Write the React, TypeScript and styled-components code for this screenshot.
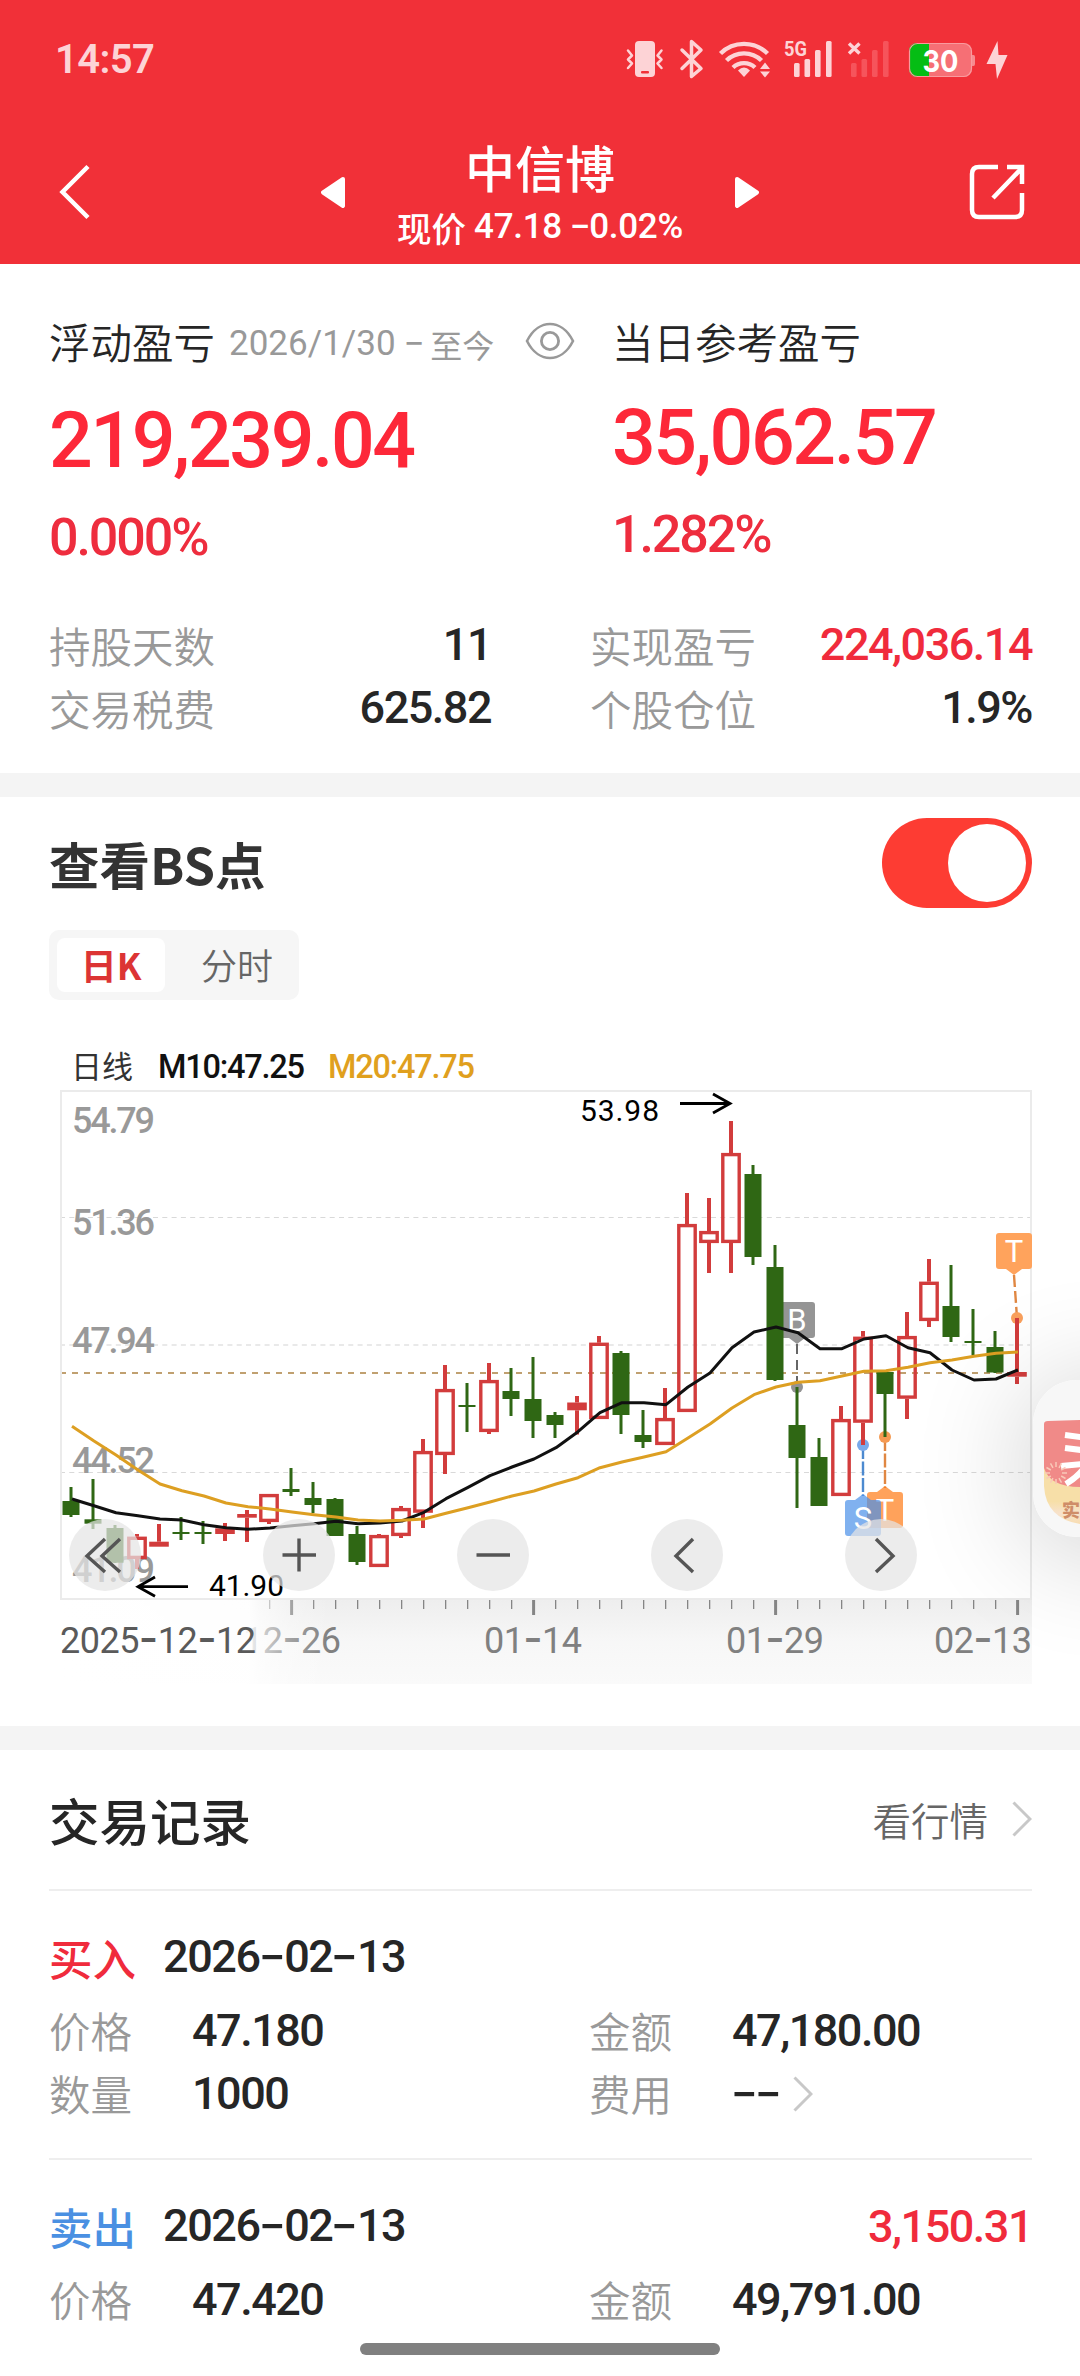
import React from "react";
import styled, { createGlobalStyle } from "styled-components";

const FONT = `Roboto, "Noto Sans CJK SC", sans-serif`;
const CJK = `"Noto Sans CJK SC", sans-serif`;

const Global = createGlobalStyle`
  * { box-sizing: border-box; }
  body { margin: 0; background: #fff; font-family: ${FONT}; }
`;

const Page = styled.div`
  position: relative;
  width: 1080px;
  height: 2376px;
  overflow: hidden;
  background: #fff;
  display: flex;
  flex-direction: column;
`;

/* ---------- text primitives ---------- */

const Cn = styled.span<{ size: number; color?: string; weight?: number; ls?: number; line?: number }>`
  display: block;
  font-family: ${CJK};
  font-size: ${(p) => p.size}px;
  line-height: ${(p) => p.line ?? 60}px;
  letter-spacing: ${(p) => p.ls ?? 0}px;
  font-weight: ${(p) => p.weight ?? 400};
  color: ${(p) => p.color ?? "#262626"};
  white-space: nowrap;
`;

const NumText = styled.span<{ size: number; color?: string; weight?: number; ls?: number; line?: number }>`
  display: block;
  font-family: ${FONT};
  font-size: ${(p) => p.size}px;
  line-height: ${(p) => p.line ?? 60}px;
  letter-spacing: ${(p) => p.ls ?? -1.5}px;
  font-weight: ${(p) => p.weight ?? 480};
  color: ${(p) => p.color ?? "#262626"};
  white-space: pre;
`;

const Dash = styled.span`
  display: inline-block;
  font-family: Inter, sans-serif;
  line-height: 1;
  letter-spacing: 0;
  margin: 0 0.04em;
  transform: translateY(-0.03em) scaleX(1.35);
`;

type NumProps = { children: string; size: number; color?: string; weight?: number; ls?: number; line?: number };

function Num({ children, ...rest }: NumProps) {
  return (
    <NumText {...rest}>
      {children.split(/(-)/).map((part, i) => (part === "-" ? <Dash key={i}>-</Dash> : part))}
    </NumText>
  );
}

/* ---------- header ---------- */

const Header = styled.header`
  height: 264px;
  background: #f13038;
  flex: none;
`;

const StatusBar = styled.div`
  height: 120px;
  padding: 0 60px 0 55px;
  display: flex;
  align-items: center;
  justify-content: space-between;
`;

const NavBar = styled.div`
  height: 144px;
  padding: 0 55px 0 57px;
  display: grid;
  grid-template-columns: 264px 24px 1fr 24px 210px 56px;
  align-items: center;
`;

const TitleBlock = styled.div`
  display: flex;
  flex-direction: column;
  align-items: center;
  padding-top: 2px;
`;

const Subtitle = styled.div`
  display: flex;
  align-items: center;
  gap: 8px;
  margin-top: 5px;
`;

const soft = "#fdd3d6";

function StatusIcons() {
  const bars = [
    [0, 63],
    [10.5, 59],
    [21, 50],
    [32, 41],
  ];
  return (
    <svg width="400" height="50" viewBox="620 35 400 50">
      <rect x="635" y="41" width="20" height="36" rx="4" fill={soft} />
      <rect x="641" y="71" width="8" height="2.4" rx="1" fill="#f13038" />
      <path d="M628 50.500l4 5-4 4 4 4-4 4.500M661.500 50.500l-4 5 4 4-4 4 4 4.500" fill="none" stroke={soft} strokeWidth="2.500" strokeLinecap="round" strokeLinejoin="round" />
      <path d="M682 50l19 18.500-9.500 8V41.500l9.500 8.500-19 18.500" fill="none" stroke={soft} strokeWidth="3.500" strokeLinecap="round" strokeLinejoin="round" />
      <g fill="none" stroke={soft} strokeWidth="4.400">
        <path d="M720.500 53.500a33.500 33.500 0 0 1 47 0" />
        <path d="M726.500 60.500a25 25 0 0 1 35 0" />
        <path d="M733 67.500a16 16 0 0 1 22 0" />
      </g>
      <path d="M738 70.500q6-6 12 0l-6 6.500z" fill={soft} />
      <path d="M760 69l5-6.500 5 6.500zM760 71.500h10l-5 6z" fill={soft} />
      <text x="784" y="56" fontFamily={FONT} fontSize="21" fontWeight="700" textLength="23" lengthAdjust="spacingAndGlyphs" fill={soft}>5G</text>
      {bars.map(([dx, y]) => (
        <rect key={dx} x={794 + dx} y={y} width="5.600" height={77 - y} rx="1.500" fill={soft} />
      ))}
      <path d="M849 43.500l10.500 10m0-10l-10.500 10" stroke={soft} strokeWidth="3.400" />
      {bars.map(([dx, y]) => (
        <rect key={dx} x={851 + dx} y={y} width="5.600" height={77 - y} rx="1.500" fill="#f6545b" />
      ))}
      <rect x="909" y="43" width="63" height="34" rx="8" fill="#f66f75" />
      <path d="M929 43h-12a8 8 0 0 0-8 8v18a8 8 0 0 0 8 8h12z" fill="#05bd14" />
      <rect x="909.500" y="43.500" width="62" height="33" rx="8" fill="none" stroke="#f99a9e" strokeWidth="1.200" />
      <path d="M972 55h1.500q1.500 0 1.500 2v7q0 2-1.500 2H972z" fill="#f78a8f" />
      <text x="940.500" y="71.500" fontFamily={`Inter, ${FONT}`} fontSize="30" fontWeight="650" textAnchor="middle" textLength="36" lengthAdjust="spacingAndGlyphs" fill="#fff">30</text>
      <path d="M997.500 41l-11 23h9l1.500 15 10.500-24h-9z" fill={soft} />
    </svg>
  );
}

/* ---------- summary ---------- */

const Summary = styled.section`
  height: 509px;
  flex: none;
  padding: 47px 48px 0 49px;
`;

const SummaryTop = styled.div`
  display: grid;
  grid-template-columns: 563px 1fr;
`;

const LabelRow = styled.div`
  height: 60px;
  display: flex;
  align-items: center;
`;

const RangeText = styled.div`
  display: flex;
  align-items: center;
  margin-left: 14px;
  width: 266px;
  gap: 7px;
  padding-top: 5px;
`;

const BigValue = styled.div<{ lift?: number }>`
  padding-top: ${(p) => 30 - (p.lift ?? 0)}px;
  padding-bottom: 17px;
`;

const EyeWrap = styled.span`
  margin-left: 30px;
  display: flex;
`;

const StatGrid = styled.div`
  display: grid;
  grid-template-columns: 442px 442px;
  column-gap: 99px;
  padding-top: 35px;
`;

const StatRow = styled.div`
  height: 63px;
  display: flex;
  align-items: center;
  justify-content: space-between;
`;

const Divider = styled.div`
  height: 24px;
  flex: none;
  background: #f4f4f4;
`;

const stats = [
  { label: "持股天数", value: "11", color: "#262626" },
  { label: "实现盈亏", value: "224,036.14", color: "#f02b3c" },
  { label: "交易税费", value: "625.82", color: "#262626" },
  { label: "个股仓位", value: "1.9%", color: "#262626" },
];

/* ---------- chart section ---------- */

const ChartSection = styled.section`
  height: 929px;
  flex: none;
  position: relative;
`;

const ChartHead = styled.div`
  height: 132px;
  padding: 0 48px 0 49px;
  display: flex;
  align-items: center;
  justify-content: space-between;
`;

const Toggle = styled.button`
  width: 150px;
  height: 90px;
  border: 0;
  border-radius: 45px;
  background: #fd3c33;
  padding: 6px;
  display: flex;
  justify-content: flex-end;
`;

const Knob = styled.span`
  width: 78px;
  height: 78px;
  border-radius: 50%;
  background: #fff;
`;

const Tabs = styled.div`
  margin: 1px 0 0 49px;
  width: 250px;
  height: 70px;
  border-radius: 10px;
  background: #f6f6f6;
  padding: 8px;
  display: flex;
`;

const Tab = styled.div<{ active?: boolean }>`
  width: ${(p) => (p.active ? 108 : 126)}px;
  height: 54px;
  padding-bottom: 3px;
  padding-left: ${(p) => (p.active ? 0 : 18)}px;
  border-radius: 8px;
  background: ${(p) => (p.active ? "#fff" : "transparent")};
  display: flex;
  align-items: center;
  justify-content: center;
`;

const ChartSvg = styled.svg`
  display: block;
  margin-top: 36px;
`;

const ChartButtons = styled.div`
  position: absolute;
  left: 69px;
  top: 722px;
  display: flex;
  gap: 122px;
`;

const RoundButton = styled.button`
  width: 72px;
  height: 72px;
  border: 0;
  border-radius: 50%;
  padding: 0;
  background: rgba(228, 228, 228, 0.72);
  display: flex;
  align-items: center;
  justify-content: center;
`;

// [kind, high, low, bodyTop, bodyBottom] in chart canvas units
type Candle = ["u" | "d", number, number, number, number];
const candles: Candle[] = [
  ["d", 1487, 1517, 1501, 1515],
  ["d", 1479, 1529, 1519.3, 1523.7],
  ["d", 1525, 1563, 1528, 1562.7],
  ["u", 1534, 1569, 1536.7, 1559],
  ["u", 1524, 1546, 1541.7, 1546.7],
  ["d", 1517, 1540, 1532, 1534],
  ["d", 1521, 1544, 1532, 1534],
  ["u", 1523, 1541, 1528.3, 1534],
  ["u", 1510, 1542, 1514, 1517.7],
  ["u", 1494, 1524, 1494, 1522],
  ["d", 1468, 1496, 1489, 1492],
  ["d", 1482, 1513, 1498, 1505],
  ["d", 1498, 1536, 1499, 1536],
  ["d", 1526, 1565, 1534, 1562],
  ["u", 1534, 1567, 1535, 1567],
  ["u", 1506, 1538, 1508, 1536],
  ["u", 1439, 1528, 1451, 1512.7],
  ["u", 1365, 1474, 1389, 1455],
  ["d", 1383, 1432, 1405, 1407],
  ["u", 1363, 1434, 1380, 1432],
  ["d", 1368, 1416, 1391, 1399],
  ["d", 1357, 1438, 1399, 1421],
  ["d", 1412, 1438, 1415, 1425],
  ["u", 1396, 1434.5, 1402.5, 1410.3],
  ["u", 1336, 1419, 1342.7, 1419],
  ["d", 1351, 1434, 1353, 1415],
  ["d", 1410, 1448, 1435, 1442],
  ["u", 1388, 1445, 1418, 1445],
  ["u", 1193, 1412, 1224, 1412],
  ["u", 1198, 1273, 1231, 1243],
  ["u", 1121, 1273, 1153, 1243],
  ["d", 1165, 1265, 1174, 1257],
  ["d", 1245, 1381, 1267, 1380],
  ["d", 1387, 1508, 1425, 1458],
  ["d", 1438, 1506, 1457, 1506],
  ["u", 1406, 1496, 1419, 1496],
  ["u", 1331, 1445, 1336.7, 1422.7],
  ["d", 1372, 1437, 1372, 1394],
  ["u", 1312, 1419, 1336, 1398.7],
  ["u", 1259, 1327, 1281.7, 1321],
  ["d", 1265, 1342, 1306, 1337],
  ["d", 1309, 1355, 1341, 1343],
  ["d", 1331, 1373, 1347, 1372.5],
  ["u", 1318, 1384, 1372, 1376.7],
];
const ma10 = [
  1499, 1505.7, 1512.7, 1515.7, 1519, 1520, 1524.7, 1527.7, 1529.3, 1528, 1525.7, 1523.7, 1521.3, 1523.7, 1523, 1521,
  1512.3, 1498.7, 1487.3, 1475.7, 1467, 1459, 1447.7, 1431.7, 1412.7, 1402.7, 1402.7, 1404.7, 1387, 1373, 1347.7, 1332,
  1327, 1332.7, 1348.7, 1348.7, 1339, 1335.7, 1347.7, 1352.7, 1370, 1380, 1379, 1370,
];
const ma20 = [
  1426.3, 1441, 1455, 1470, 1484, 1490.7, 1496, 1503, 1506.7, 1509, 1512, 1514.7, 1517, 1520, 1521, 1520.3, 1519, 1513.3,
  1507.7, 1502, 1496, 1491, 1484, 1477.7, 1467.7, 1462, 1457, 1451.7, 1438, 1424, 1408, 1394.7, 1387, 1382.3, 1380.7,
  1376, 1371.3, 1370.7, 1367.3, 1362.7, 1360, 1356.3, 1353.3, 1352,
];
const cx = (i: number) => 71 + i * 22;
const line = (v: number[]) => v.map((y, i) => `${cx(i) + 1},${y}`).join(" ");

function CandleMark({ c, i }: { c: Candle; i: number }) {
  const [kind, hi, lo, top, bottom] = c;
  const x = cx(i);
  if (kind === "d") {
    return (
      <g fill="#2f6714">
        <rect x={x - 1.5} y={hi} width="3" height={lo - hi} />
        <rect x={x - 8.5} y={top} width="17" height={bottom - top} />
      </g>
    );
  }
  const h = bottom - top;
  return (
    <g fill="#d23c3c">
      {top > hi && <rect x={x - 2} y={hi} width="4" height={top - hi} />}
      {lo > bottom && <rect x={x - 2} y={bottom} width="4" height={lo - bottom} />}
      {h > 8.5 ? (
        <rect x={x - 8.2} y={top + 1.6} width="16.4" height={h - 3.2} fill="none" stroke="#d23c3c" strokeWidth="3.400" />
      ) : (
        <rect x={x - 9.8} y={top} width="19.6" height={h} />
      )}
    </g>
  );
}

function Badge({ x, y, tip, color, letter }: { x: number; y: number; tip: "up" | "down"; color: string; letter: string }) {
  const c = x + 18;
  return (
    <g>
      <path
        fill={color}
        d={
          tip === "down"
            ? `M${x + 3} ${y}h30q3 0 3 3v30q0 3-3 3H${c + 8}l-8 6-8-6H${x + 3}q-3 0-3-3v-30q0-3 3-3z`
            : `M${x + 3} ${y}H${c - 8}l8-6 8 6h7q3 0 3 3v30q0 3-3 3h-30q-3 0-3-3v-30q0-3 3-3z`
        }
      />
      <text x={c} y={y + 29} textAnchor="middle" fontFamily={FONT} fontSize="31" fill="#fff">{letter}</text>
    </g>
  );
}

function AxisDate({ x, width, fill, children }: { x: number; width: number; fill: string; children: string }) {
  return (
    <text x={x} y="1653" textLength={width} fontFamily={FONT} fontWeight="450" fontSize="36" fill={fill}>
      {children.split(/(-)/).map((part, i) =>
        part === "-" ? (
          <tspan key={i} fontFamily="Inter, sans-serif" fontSize="42">-</tspan>
        ) : (
          <tspan key={i}>{part}</tspan>
        )
      )}
    </text>
  );
}

function Chart() {
  const axisFont = { fontFamily: FONT, fontWeight: 480, fontSize: 36 } as const;
  return (
    <ChartSvg width="1080" height="654" viewBox="0 1036 1080 654">
      <defs>
        <linearGradient id="band" x1="0" y1="0" x2="0" y2="1">
          <stop offset="0" stopColor="#eeeeee" />
          <stop offset="0.5" stopColor="#f7f7f7" />
          <stop offset="1" stopColor="#fafafa" />
        </linearGradient>
        <linearGradient id="fade" gradientUnits="userSpaceOnUse" x1="60" y1="0" x2="330" y2="0">
          <stop offset="0" stopColor="#fff" />
          <stop offset="0.7" stopColor="#fff" stopOpacity="0.93" />
          <stop offset="0.74" stopColor="#fff" stopOpacity="0.65" />
          <stop offset="0.86" stopColor="#fff" stopOpacity="0.25" />
          <stop offset="1" stopColor="#fff" stopOpacity="0" />
        </linearGradient>
      </defs>

      <text x="71" y="1078" fontFamily={CJK} fontSize="31" textLength="62" fill="#333">日线</text>
      <text x="158" y="1078" fontFamily={FONT} fontWeight="480" fontSize="32.500" textLength="147" fill="#111">M10:47.25</text>
      <text x="328" y="1078" fontFamily={FONT} fontWeight="480" fontSize="32.500" textLength="147" fill="#e0a01e">M20:47.75</text>

      <path d="M60 1217.500H1031M60 1472.500H1031" stroke="#d9d9d9" strokeWidth="1" strokeDasharray="5 4.300" />
      <path d="M60 1345H1031" stroke="#e9e9e9" strokeWidth="2" strokeDasharray="5 4.300" />
      <path d="M60 1373H1031" stroke="#c0a070" strokeWidth="2" strokeDasharray="6 6" />
      <rect x="61" y="1091" width="970" height="508" fill="none" stroke="#ebebeb" strokeWidth="2" />

      <g {...axisFont} fill="#999">
        <text x="72" y="1133" textLength="83">54.79</text>
        <text x="72" y="1235" textLength="83">51.36</text>
        <text x="72" y="1353" textLength="83">47.94</text>
        <text x="72" y="1472.500" textLength="83">44.52</text>
        <text x="72" y="1582" textLength="83">41.09</text>
      </g>

      <Badge x={779} y={1302} tip="down" color="#959595" letter="B" />
      <path d="M797 1344V1386" stroke="#666" strokeWidth="2" strokeDasharray="10 6" />
      <circle cx="797" cy="1387" r="6" fill="#929292" />
      <path d="M885 1437V1488" stroke="#e08742" strokeWidth="2.400" strokeDasharray="14 2.500" />
      <path d="M863 1445V1496" stroke="#4d8ad0" strokeWidth="2.400" strokeDasharray="14 2.500" />
      <circle cx="885" cy="1437" r="6" fill="#f59a52" />
      <circle cx="863" cy="1445" r="6" fill="#79a9ea" />
      <path d="M1014 1275L1017 1318" stroke="#e08742" strokeWidth="2.400" strokeDasharray="12 4" />
      <circle cx="1017" cy="1318" r="6" fill="#f9a05c" />

      {candles.map((c, i) => (
        <CandleMark key={i} c={c} i={i} />
      ))}

      <polyline points={line(ma10)} fill="none" stroke="#111" strokeWidth="3" strokeLinejoin="round" />
      <polyline points={line(ma20)} fill="none" stroke="#dd9f22" strokeWidth="3" strokeLinejoin="round" />

      <Badge x={996} y={1233} tip="down" color="#ffa35c" letter="T" />
      <Badge x={867} y={1492} tip="up" color="rgba(255,123,22,0.7)" letter="T" />
      <Badge x={845} y={1500} tip="up" color="rgba(74,144,232,0.7)" letter="S" />

      <g fill="none" stroke="#000" strokeWidth="2.800">
        <path d="M680 1103.500H730M713 1094L730 1103.500 713 1113" />
        <path d="M188 1586.700H138M155 1577L138 1586.700 155 1596.300" />
      </g>
      <text x="580" y="1121" fontFamily={FONT} fontSize="30" textLength="79" fill="#000">53.98</text>
      <text x="209" y="1595.500" fontFamily={FONT} fontSize="30" textLength="75" fill="#000">41.90</text>

      <rect x="60" y="1600" width="972" height="84" fill="url(#band)" />
      {Array.from({ length: 35 }, (_, k) => k + 9).map((i) => {
        const major = i === 10 || i === 21 || i === 32 || i === 43;
        return (
          <rect key={i} x={cx(i) + 0.6 - (major ? 1.5 : 0.6)} y="1600" width={major ? 3 : 1.3} height={major ? 15 : 9} fill="#858585" />
        );
      })}
      <AxisDate x={243} width={98} fill="#808080">12-26</AxisDate>
      <AxisDate x={484} width={98} fill="#808080">01-14</AxisDate>
      <AxisDate x={726} width={98} fill="#808080">01-29</AxisDate>
      <AxisDate x={934} width={98} fill="#808080">02-13</AxisDate>
      <rect x="60" y="1600" width="270" height="84" fill="url(#fade)" />
      <AxisDate x={60} width={196} fill="#5a5a5a">2025-12-12</AxisDate>
    </ChartSvg>
  );
}

const icon = { fill: "none", stroke: "#555", strokeWidth: 3.4 } as const;
const buttonPaths = [
  "M36 20L18 37 36 53M51 20L33 37 51 53",
  "M19.500 36H53M36 19.500V52.500",
  "M19.500 36H53",
  "M42 20L25 37 42 53",
  "M31 20L48 37 31 53",
];

/* ---------- floating promo ---------- */

const FloatGlow = styled.div`
  position: absolute;
  left: 1033px;
  top: 1380px;
  width: 160px;
  height: 157px;
  border-radius: 44px;
  background: rgba(247, 247, 247, 0.95);
  box-shadow: 0 10px 110px 12px rgba(0, 0, 0, 0.16);
`;

const FloatIcon = styled.svg`
  position: absolute;
  left: 11px;
  top: 36px;
`;

/* ---------- trades ---------- */

const Trades = styled.section`
  padding: 0 48px 0 49px;
  display: flex;
  flex-direction: column;
`;

const TradesHead = styled.div`
  height: 141px;
  flex: none;
  padding-bottom: 2px;
  display: flex;
  align-items: center;
  justify-content: space-between;
  border-bottom: 2px solid #eee;
`;

const MoreLink = styled.div`
  display: flex;
  align-items: center;
  gap: 24px;
`;

const Trade = styled.article`
  height: 269px;
  flex: none;
  padding-top: 35px;
  border-bottom: 2px solid #eee;
`;

const TradeTitle = styled.div`
  height: 64px;
  display: flex;
  align-items: center;
`;

const TradeDate = styled.div`
  margin: -2px 0 0 27px;
  flex: 1;
`;

const FieldGrid = styled.div`
  display: grid;
  grid-template-columns: 540px 1fr;
  padding-top: 8px;
`;

const Field = styled.div`
  height: 63px;
  display: flex;
  align-items: center;
`;

const FieldLabel = styled.div`
  width: 143px;
`;

const FieldValue = styled.div`
  margin-top: 2px;
  display: flex;
  align-items: center;
  gap: 12px;
`;

const HomeBar = styled.div`
  position: absolute;
  left: 360px;
  top: 2343px;
  width: 360px;
  height: 12px;
  border-radius: 6px;
  background: #808080;
`;

function Chevron() {
  return (
    <svg width="20" height="36" viewBox="0 0 20 36">
      <path d="M1.500 1.500L18 18 1.500 34.500" fill="none" stroke="#c8c8c8" strokeWidth="3" />
    </svg>
  );
}

const trades = [
  {
    side: "买入",
    color: "#f02b3c",
    date: "2026-02-13",
    profit: "",
    fields: [
      ["价格", "47.180"],
      ["金额", "47,180.00"],
      ["数量", "1000"],
      ["费用", "--"],
    ],
  },
  {
    side: "卖出",
    color: "#4a90e2",
    date: "2026-02-13",
    profit: "3,150.31",
    fields: [
      ["价格", "47.420"],
      ["金额", "49,791.00"],
    ],
  },
];

export default function App() {
  return (
    <Page>
      <Global />
      <Header>
        <StatusBar>
          <Num size={40} weight={600} color={soft} ls={-0.6}>14:57</Num>
          <StatusIcons />
        </StatusBar>
        <NavBar>
          <svg width="34" height="56" viewBox="0 0 34 56">
            <path d="M31 2.500L5.500 28 31 53.500" fill="none" stroke="#fff" strokeWidth="4.500" />
          </svg>
          <svg width="24" height="31" viewBox="0 0 24 31">
            <path d="M22 2L2 15.500 22 29z" fill="#fff" stroke="#fff" strokeWidth="4" strokeLinejoin="round" />
          </svg>
          <TitleBlock>
            <Cn size={50} weight={500} color="#fff" line={62}>中信博</Cn>
            <Subtitle>
              <Cn size={34.5} color="#fff" weight={500} line={50}>现价</Cn>
              <Num size={35} color="#fff" line={50} ls={-0.3}>47.18 -0.02%</Num>
            </Subtitle>
          </TitleBlock>
          <svg width="24" height="31" viewBox="0 0 24 31">
            <path d="M2 2l20 13.500L2 29z" fill="#fff" stroke="#fff" strokeWidth="4" strokeLinejoin="round" />
          </svg>
          <span />
          <svg width="56" height="56" viewBox="0 0 56 56">
            <path d="M29 3H10Q3 3 3 10v36q0 7 7 7h36q7 0 7-7V29M24 34L52 5M38 3h15v17" fill="none" stroke="#fff" strokeWidth="4.500" />
          </svg>
        </NavBar>
      </Header>

      <Summary>
        <SummaryTop>
          <div>
            <LabelRow>
              <Cn size={41.5} weight={350}>浮动盈亏</Cn>
              <RangeText>
                <Num size={35} weight={400} color="#999" ls={0}>2026/1/30 -</Num>
                <Cn size={32} color="#999">至今</Cn>
              </RangeText>
              <EyeWrap>
                <svg width="50" height="38" viewBox="0 0 50 38">
                  <path d="M2 19C8 7 17 2 25 2s17 5 23 17c-6 12-15 17-23 17S8 31 2 19z" fill="none" stroke="#999" strokeWidth="2.600" />
                  <circle cx="25" cy="19" r="8.600" fill="none" stroke="#999" strokeWidth="2.800" />
                </svg>
              </EyeWrap>
            </LabelRow>
            <BigValue>
              <Num size={77} line={80} color="#fd2839" ls={-2.4}>219,239.04</Num>
            </BigValue>
            <Num size={52} color="#ee2d3e" line={80} ls={-2.1}>0.000%</Num>
          </div>
          <div>
            <LabelRow>
              <Cn size={41.5} weight={350}>当日参考盈亏</Cn>
            </LabelRow>
            <BigValue lift={3}>
              <Num size={77} line={80} color="#fd2839" ls={-2.4}>35,062.57</Num>
            </BigValue>
            <Num size={52} color="#ee2d3e" line={80} ls={-2.1}>1.282%</Num>
          </div>
        </SummaryTop>
        <StatGrid>
          {stats.map((s) => (
            <StatRow key={s.label}>
              <Cn size={41.5} color="#999" weight={350}>{s.label}</Cn>
              <Num size={45} color={s.color}>{s.value}</Num>
            </StatRow>
          ))}
        </StatGrid>
      </Summary>
      <Divider />

      <ChartSection>
        <ChartHead>
          <Cn size={50.5} weight={700} color="#333" ls={0}>查看BS点</Cn>
          <Toggle aria-label="查看BS点">
            <Knob />
          </Toggle>
        </ChartHead>
        <Tabs>
          <Tab active>
            <Cn size={36} weight={700} color="#dc3434" line={50}>日K</Cn>
          </Tab>
          <Tab>
            <Cn size={36} weight={350} color="#666" line={50}>分时</Cn>
          </Tab>
        </Tabs>
        <Chart />
        <ChartButtons>
          {buttonPaths.map((d) => (
            <RoundButton key={d}>
              <svg width="72" height="72" viewBox="0 0 72 72">
                <path d={d} {...icon} />
              </svg>
            </RoundButton>
          ))}
        </ChartButtons>
      </ChartSection>
      <Divider />

      <Trades>
        <TradesHead>
          <Cn size={50.5} weight={500}>交易记录</Cn>
          <MoreLink>
            <Cn size={38.5} color="#666" weight={350}>看行情</Cn>
            <Chevron />
          </MoreLink>
        </TradesHead>
        {trades.map((t) => (
          <Trade key={t.side}>
            <TradeTitle>
              <Cn size={43.5} weight={500} color={t.color}>{t.side}</Cn>
              <TradeDate>
                <Num size={45} ls={-1.4}>{t.date}</Num>
              </TradeDate>
              {t.profit && <Num size={45} color="#f02b3c">{t.profit}</Num>}
            </TradeTitle>
            <FieldGrid>
              {t.fields.map(([label, value]) => (
                <Field key={label}>
                  <FieldLabel>
                    <Cn size={41.5} color="#999" weight={350}>{label}</Cn>
                  </FieldLabel>
                  <FieldValue>
                    <Num size={45}>{value}</Num>
                    {value === "--" && <Chevron />}
                  </FieldValue>
                </Field>
              ))}
            </FieldGrid>
          </Trade>
        ))}
      </Trades>

      <FloatGlow>
        <FloatIcon width="110" height="112" viewBox="0 0 110 112">
          <defs>
            <linearGradient id="cream" x1="0" y1="0" x2="0" y2="1">
              <stop offset="0.600" stopColor="#f7dfa8" />
              <stop offset="0.800" stopColor="#f7e2cc" />
              <stop offset="1" stopColor="#f8dcae" />
            </linearGradient>
          </defs>
          <path d="M0 50V70Q2 106 44 109H110V50z" fill="url(#cream)" />
          <path d="M0 8Q0 5 4 5L110 2V71H36Q6 71 0 52z" fill="#f08a88" />
          <path d="M21 19l30 4M21 32l24 3M17 50L60 46M22 68Q38 58 42 48" fill="none" stroke="#fff" strokeWidth="6" />
          <g stroke="#f9c9b8" strokeWidth="1.500" fill="none">
            {Array.from({ length: 12 }, (_, k) => (
              <path key={k} d="M12 51V46" transform={`rotate(${k * 30} 12 57)`} />
            ))}
          </g>
          <text x="18" y="101" fontFamily={CJK} fontWeight="900" fontSize="18" fill="#cf8d68">实</text>
        </FloatIcon>
      </FloatGlow>
      <HomeBar />
    </Page>
  );
}
